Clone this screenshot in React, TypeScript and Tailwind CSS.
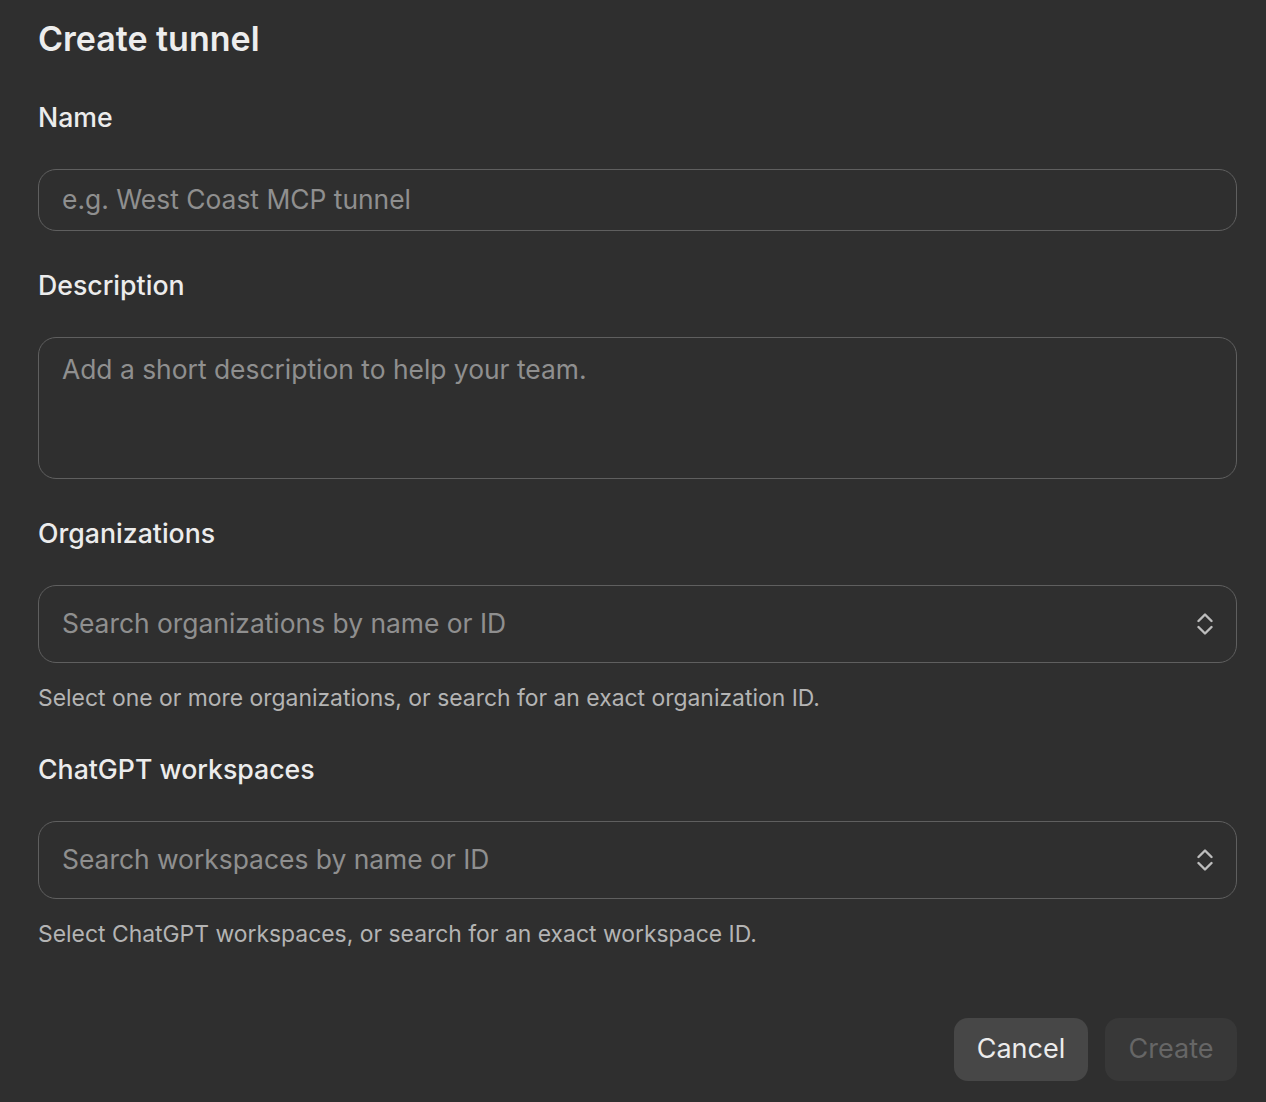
import React from 'react';

function UpDown() {
  return (
    <svg width="16" height="24" viewBox="0 0 16 24" fill="none" stroke="currentColor" strokeWidth="2.4" strokeLinecap="round" strokeLinejoin="round">
      <path d="M1.5 9 8 2.5 14.5 9" />
      <path d="M1.5 15 8 21.5 14.5 15" />
    </svg>
  );
}

function Label({ children, className = '' }: { children: React.ReactNode; className?: string }) {
  return <div className={`text-[26.7px] leading-[32px] font-medium text-[#ececec] ${className}`}>{children}</div>;
}

function SelectBox({ placeholder }: { placeholder: string }) {
  return (
    <div className="mt-[36px] h-[78px] rounded-[18px] border border-[#5f5f5f] flex items-center justify-between pl-[23px] pr-[23px]">
      <span className="text-[26.4px] text-[#8f8f8f]">{placeholder}</span>
      <span className="text-[#bdbdbd]">
        <UpDown />
      </span>
    </div>
  );
}

export default function App() {
  return (
    <div
      className="min-h-[1102px] w-full bg-[#2f2f2f] pl-[38px] pr-[29px] pt-[19px] pb-[21px]"
      style={{ fontFamily: 'Inter, "Noto Sans", sans-serif' }}
    >
      <h1 className="text-[34px] leading-[40px] font-semibold text-[#ededed]">Create tunnel</h1>

      <Label className="mt-[42px]">Name</Label>
      <div className="mt-[36px] h-[62px] rounded-[18px] border border-[#5f5f5f] flex items-center pl-[23px]">
        <span className="text-[26.4px] text-[#8f8f8f]">e.g. West Coast MCP tunnel</span>
      </div>

      <Label className="mt-[38px]">Description</Label>
      <div className="mt-[36px] h-[142px] rounded-[18px] border border-[#5f5f5f] pl-[23px] pt-[13px]">
        <span className="text-[26.4px] leading-[36px] text-[#8f8f8f]">Add a short description to help your team.</span>
      </div>

      <Label className="mt-[38px]">Organizations</Label>
      <SelectBox placeholder="Search organizations by name or ID" />
      <p className="mt-[21px] text-[22.9px] leading-[28px] text-[#b4b4b4]">
        Select one or more organizations, or search for an exact organization ID.
      </p>

      <Label className="mt-[41px]">ChatGPT workspaces</Label>
      <SelectBox placeholder="Search workspaces by name or ID" />
      <p className="mt-[21px] text-[22.9px] leading-[28px] text-[#b4b4b4]">
        Select ChatGPT workspaces, or search for an exact workspace ID.
      </p>

      <div className="mt-[70px] flex justify-end gap-[17px]">
        <button className="h-[63px] w-[134px] rounded-[14px] bg-[#474747] text-[27px] text-[#ececec]">Cancel</button>
        <button className="h-[63px] w-[132px] rounded-[14px] bg-[#383838] text-[27px] text-[#666666]">Create</button>
      </div>
    </div>
  );
}
